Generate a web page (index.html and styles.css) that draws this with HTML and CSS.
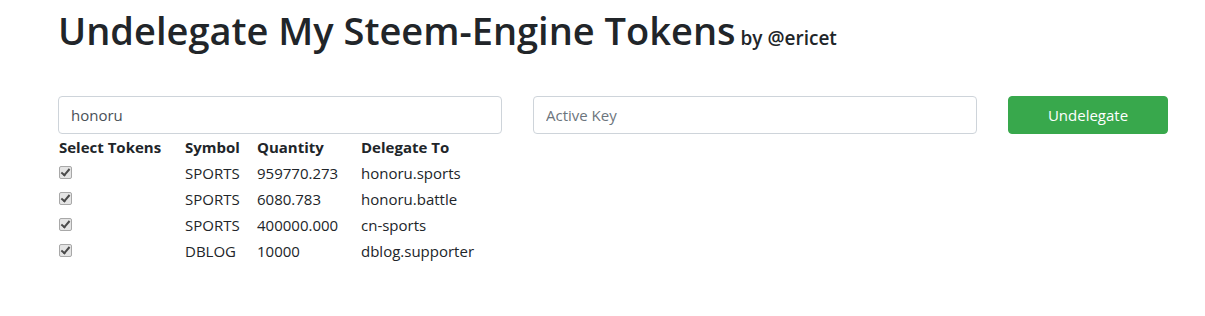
FILE: index.html
```html
<!DOCTYPE html>
<html lang="en">
<head>
    <meta charset="UTF-8">
    <meta name="viewport" content="width=device-width, initial-scale=1.0">
    <title>Undelegate My Steem-Engine Tokens</title>
    <link rel="stylesheet" href="styles.css">
</head>
<body>
    <div class="container">
        <h1>Undelegate My Steem-Engine Tokens<small> by @ericet</small></h1>

        <form id="undelegate-form" class="form-row">
            <input type="text" class="form-control" id="username" value="honoru">
            <input type="password" class="form-control" id="active-key" placeholder="Active Key">
            <button type="submit" class="btn-success">Undelegate</button>
        </form>

        <table class="tokens">
            <colgroup>
                <col class="col-select">
                <col class="col-symbol">
                <col class="col-quantity">
                <col>
            </colgroup>
            <thead>
                <tr>
                    <th>Select Tokens</th>
                    <th>Symbol</th>
                    <th>Quantity</th>
                    <th>Delegate To</th>
                </tr>
            </thead>
            <tbody>
                <tr>
                    <td><input type="checkbox" checked></td>
                    <td>SPORTS</td>
                    <td>959770.273</td>
                    <td>honoru.sports</td>
                </tr>
                <tr>
                    <td><input type="checkbox" checked></td>
                    <td>SPORTS</td>
                    <td>6080.783</td>
                    <td>honoru.battle</td>
                </tr>
                <tr>
                    <td><input type="checkbox" checked></td>
                    <td>SPORTS</td>
                    <td>400000.000</td>
                    <td>cn-sports</td>
                </tr>
                <tr>
                    <td><input type="checkbox" checked></td>
                    <td>DBLOG</td>
                    <td>10000</td>
                    <td>dblog.supporter</td>
                </tr>
            </tbody>
        </table>
    </div>
</body>
</html>
```

FILE: styles.css
```css
body {
    margin: 0;
    font-family: "Open Sans", "Noto Sans", sans-serif;
    font-size: 16px;
    line-height: 1.5;
    color: #212529;
    background-color: #fff;
}

.container {
    width: 1110px;
    margin-left: 58px;
}

h1 {
    margin: 6px 0 42px 0;
    font-size: 38px;
    font-weight: 600;
    line-height: 48px;
}

h1 small {
    font-size: 19px;
    font-weight: 600;
    line-height: 1;
}

/* Inputs and button on one row */
.form-row {
    display: grid;
    grid-template-columns: 444px 444px 160px;
    column-gap: 31px;
    margin: 0;
}

.form-control {
    box-sizing: border-box;
    height: 38px;
    padding: 6px 12px;
    font-family: inherit;
    font-size: 15px;
    color: #495057;
    border: 1px solid #ced4da;
    border-radius: 4px;
    outline: none;
}

.form-control::placeholder {
    color: #6c757d;
}

.btn-success {
    height: 38px;
    font-family: inherit;
    font-size: 15px;
    color: #fff;
    background-color: #38a84c;
    border: 1px solid #38a84c;
    border-radius: 4px;
    cursor: pointer;
}

/* Token table */
.tokens {
    border-collapse: collapse;
    table-layout: fixed;
    width: 520px;
    font-size: 15px;
}

.col-select { width: 126px; }
.col-symbol { width: 72px; }
.col-quantity { width: 104px; }

.tokens th,
.tokens td {
    padding: 1px;
    text-align: left;
    height: 24px;
}

.tokens th {
    font-weight: 700;
}

.tokens input[type="checkbox"] {
    appearance: none;
    box-sizing: border-box;
    width: 13px;
    height: 13px;
    margin: 0;
    vertical-align: 0;
    border: 1px solid #a8a8a8;
    border-radius: 2px;
    background-color: #e4e4e4;
    position: relative;
}

.tokens input[type="checkbox"]:checked::after {
    content: "";
    position: absolute;
    left: 3px;
    top: 0px;
    width: 3px;
    height: 7px;
    border: solid #4a4a4a;
    border-width: 0 2px 2px 0;
    transform: rotate(40deg);
}
```
